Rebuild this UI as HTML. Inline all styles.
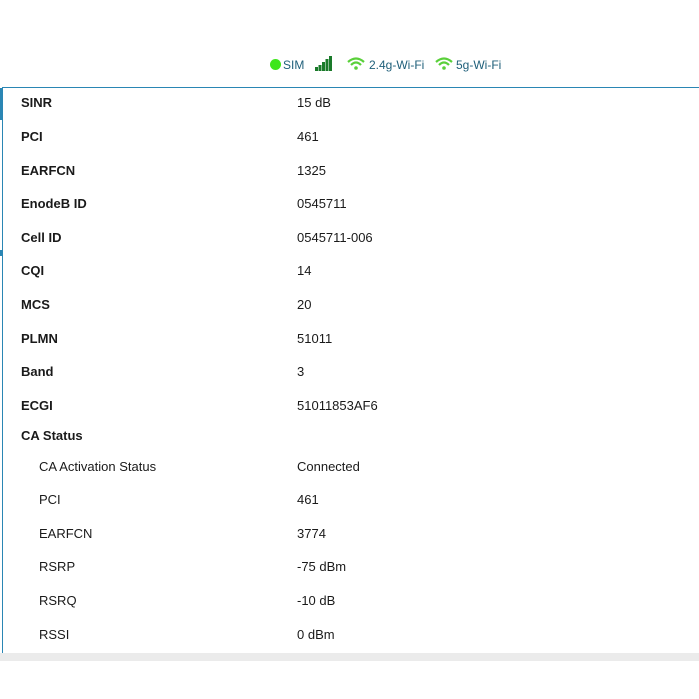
<!DOCTYPE html><html><head><style>
body{margin:0;width:699px;height:699px;background:#fff;position:relative;overflow:hidden;font-family:"Liberation Sans",sans-serif;font-size:13px;color:#1a1a1a}
.t{position:absolute;white-space:nowrap;line-height:16px}
.b{font-weight:bold}
</style></head><body>
<div style="position:absolute;left:270px;top:59px;width:11px;height:11px;border-radius:50%;background:#3ee61a"></div>
<div class="t" style="left:283px;top:57px;font-size:12px;color:#1f5f7a">SIM</div>
<svg style="position:absolute;left:315px;top:56px" width="17" height="15"><rect x="0" y="11" width="3" height="4" fill="#1a7a2a"/><rect x="3.5" y="9" width="3" height="6" fill="#1a7a2a"/><rect x="7" y="6" width="3" height="9" fill="#1a7a2a"/><rect x="10.5" y="3" width="3" height="12" fill="#1a7a2a"/><rect x="14" y="0" width="3" height="15" fill="#1a7a2a"/></svg>
<svg style="position:absolute;left:347px;top:57px" width="18" height="13"><path d="M1 5Q9-2 17 5" stroke="#5ad03a" stroke-width="2.2" fill="none"/><path d="M4 8Q9 3 14 8" stroke="#5ad03a" stroke-width="2.2" fill="none"/><circle cx="9" cy="11" r="1.8" fill="#5ad03a"/></svg>
<div class="t" style="left:369px;top:57px;font-size:12px;color:#1f5f7a">2.4g-Wi-Fi</div>
<svg style="position:absolute;left:435px;top:57px" width="18" height="13"><path d="M1 5Q9-2 17 5" stroke="#5ad03a" stroke-width="2.2" fill="none"/><path d="M4 8Q9 3 14 8" stroke="#5ad03a" stroke-width="2.2" fill="none"/><circle cx="9" cy="11" r="1.8" fill="#5ad03a"/></svg>
<div class="t" style="left:456px;top:57px;font-size:12px;color:#1f5f7a">5g-Wi-Fi</div>
<div style="position:absolute;left:2px;top:87px;width:697px;height:565px;border-top:1px solid #2a86b4;border-left:1px solid #2a86b4;border-bottom:1px solid #2a86b4"></div>
<div style="position:absolute;left:0;top:88px;width:3px;height:32px;background:#2a86b4"></div>
<div style="position:absolute;left:0;top:250px;width:2px;height:6px;background:#2a86b4"></div>
<div style="position:absolute;left:0;top:653px;width:699px;height:8px;background:#ebebeb"></div>
<div class="t b" style="left:21px;top:95px">SINR</div><div class="t" style="left:297px;top:95px">15 dB</div>
<div class="t b" style="left:21px;top:129px">PCI</div><div class="t" style="left:297px;top:129px">461</div>
<div class="t b" style="left:21px;top:163px">EARFCN</div><div class="t" style="left:297px;top:163px">1325</div>
<div class="t b" style="left:21px;top:196px">EnodeB ID</div><div class="t" style="left:297px;top:196px">0545711</div>
<div class="t b" style="left:21px;top:230px">Cell ID</div><div class="t" style="left:297px;top:230px">0545711-006</div>
<div class="t b" style="left:21px;top:263px">CQI</div><div class="t" style="left:297px;top:263px">14</div>
<div class="t b" style="left:21px;top:297px">MCS</div><div class="t" style="left:297px;top:297px">20</div>
<div class="t b" style="left:21px;top:331px">PLMN</div><div class="t" style="left:297px;top:331px">51011</div>
<div class="t b" style="left:21px;top:364px">Band</div><div class="t" style="left:297px;top:364px">3</div>
<div class="t b" style="left:21px;top:398px">ECGI</div><div class="t" style="left:297px;top:398px">51011853AF6</div>
<div class="t b" style="left:21px;top:428px">CA Status</div>
<div class="t" style="left:39px;top:459px">CA Activation Status</div><div class="t" style="left:297px;top:459px">Connected</div>
<div class="t" style="left:39px;top:492px">PCI</div><div class="t" style="left:297px;top:492px">461</div>
<div class="t" style="left:39px;top:526px">EARFCN</div><div class="t" style="left:297px;top:526px">3774</div>
<div class="t" style="left:39px;top:559px">RSRP</div><div class="t" style="left:297px;top:559px">-75 dBm</div>
<div class="t" style="left:39px;top:593px">RSRQ</div><div class="t" style="left:297px;top:593px">-10 dB</div>
<div class="t" style="left:39px;top:627px">RSSI</div><div class="t" style="left:297px;top:627px">0 dBm</div>
</body></html>
